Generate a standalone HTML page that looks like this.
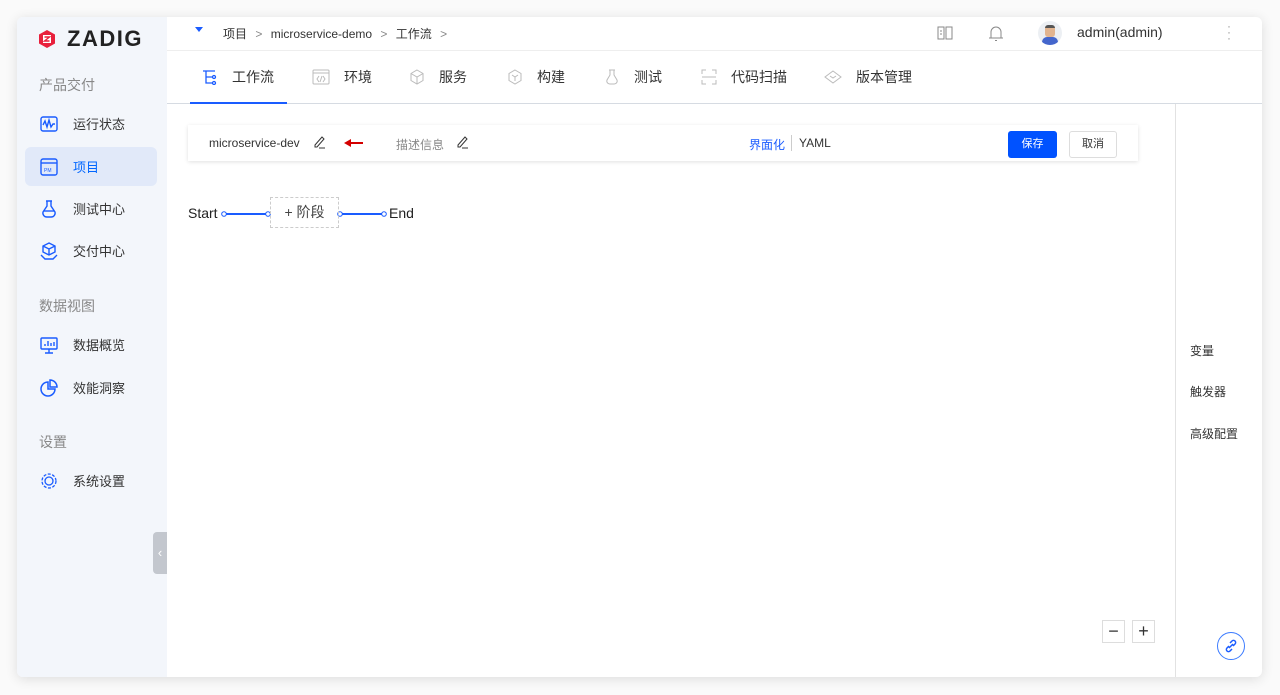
<!DOCTYPE html>
<html><head><meta charset="utf-8"><style>
*{box-sizing:border-box;margin:0;padding:0}
body{width:1280px;height:695px;background:#fafafa;font-family:"Liberation Sans","Noto Sans CJK SC",sans-serif;position:relative;overflow:hidden;color:#333}
.win{position:absolute;left:17px;top:17px;width:1245px;height:660px;background:#fff;border-radius:6px;box-shadow:0 2px 12px rgba(0,0,0,.12);overflow:hidden}
.side{position:absolute;left:0;top:0;width:150px;height:660px;background:#f3f6fb}
.logo{position:absolute;left:20px;top:9px;font-size:22px;font-weight:bold;color:#222;letter-spacing:1.5px}
.sec{position:absolute;left:22px;font-size:14px;color:#888}
.item{position:absolute;left:8px;width:132px;height:39px;font-size:13px;color:#333;display:flex;align-items:center;padding-left:15px}
.item svg{margin-right:15px}
.item.act{background:#e1e9f9;border-radius:6px;color:#0066ff}
.top{position:absolute;left:150px;top:0;right:0;height:34px;border-bottom:1px solid #eee;font-size:12px;color:#333}
.tabs{position:absolute;left:150px;top:34px;right:0;height:53px;border-bottom:1px solid #d6dbe2}
.tab{position:absolute;top:0;height:52px;display:flex;align-items:center;font-size:14px;color:#333}
.tab svg{margin-right:14px}
.rp{position:absolute;left:1158px;top:87px;width:1px;height:573px;background:#e2e2e2}
.rt{position:absolute;left:1173px;font-size:12px;color:#333}
.bar{position:absolute;left:171px;top:108px;width:950px;height:36px;background:#fff;box-shadow:0 1px 4px rgba(0,0,0,.12);font-size:12px}
</style></head><body>
<div class="win">
<div class="side">
 <div class="logo"><svg width="20" height="20" viewBox="0 0 20 20" style="vertical-align:-3px;margin-right:10px"><polygon points="10,1 18,5.5 18,14.5 10,19 2,14.5 2,5.5" fill="#e8203c"/><rect x="6" y="6" width="8" height="8" fill="#fff"/><path d="M7.5 8h5l-5 4h5" stroke="#e8203c" stroke-width="1.4" fill="none"/></svg>ZADIG</div>
 <div class="sec" style="top:58px">产品交付</div>
 <div class="item" style="top:87px"><svg width="18" height="18" viewBox="0 0 18 18" fill="none" stroke="#1a5cff" stroke-width="1.4"><rect x="1" y="2" width="16" height="14" rx="2"/><path d="M3 10l2-4 2 6 2-7 2 7 2-3h2"/></svg>运行状态</div>
 <div class="item act" style="top:130px"><svg width="18" height="18" viewBox="0 0 18 18" fill="none" stroke="#1a5cff" stroke-width="1.4"><rect x="1" y="1" width="16" height="16" rx="2"/><path d="M1 5h16"/><text x="4" y="14" font-size="5" fill="#1a5cff" stroke="none">PM</text></svg>项目</div>
 <div class="item" style="top:172px"><svg width="18" height="18" viewBox="0 0 18 18" fill="none" stroke="#1a5cff" stroke-width="1.4"><path d="M6 1h6M7 1v5l-4 6a4 4 0 0 0 4 5h4a4 4 0 0 0 4-5l-4-6V1"/><path d="M4 11h10"/></svg>测试中心</div>
 <div class="item" style="top:214px"><svg width="18" height="18" viewBox="0 0 18 18" fill="none" stroke="#1a5cff" stroke-width="1.4"><path d="M9 1l6 3v6l-6 3-6-3V4z M3 4l6 3 6-3 M9 7v6"/><path d="M1 13l4 4h8l4-4"/></svg>交付中心</div>
 <div class="sec" style="top:279px">数据视图</div>
 <div class="item" style="top:308px"><svg width="18" height="18" viewBox="0 0 18 18" fill="none" stroke="#1a5cff" stroke-width="1.4"><rect x="1" y="2" width="16" height="11" rx="1"/><path d="M9 13v4M5 17h8M5 10V8M8 10V5M11 10V7M14 10V6"/></svg>数据概览</div>
 <div class="item" style="top:351px"><svg width="18" height="18" viewBox="0 0 18 18" fill="none" stroke="#1a5cff" stroke-width="1.5"><path d="M8 3a7 7 0 1 0 7 7H8z"/><path d="M10 1a7 7 0 0 1 7 7h-7z"/></svg>效能洞察</div>
 <div class="sec" style="top:415px">设置</div>
 <div class="item" style="top:444px"><svg width="18" height="18" viewBox="0 0 18 18" fill="none" stroke="#1a5cff" stroke-width="1.3"><circle cx="9" cy="9" r="4"/><circle cx="9" cy="9" r="7" stroke-dasharray="3 1.5"/></svg>系统设置</div>
 <div style="position:absolute;left:136px;top:515px;width:14px;height:42px;background:#c3c7ce;border-radius:4px 0 0 4px;color:#fff;font-size:13px;text-align:center;line-height:42px">‹</div>
</div>
<div class="top">
 <span style="position:absolute;left:28px;top:10px;width:0;height:0;border-left:4px solid transparent;border-right:4px solid transparent;border-top:5px solid #1a5cff"></span>
 <span style="position:absolute;left:56px;top:8px">项目 <span style="color:#888;margin:0 5px">&gt;</span> microservice-demo <span style="color:#888;margin:0 5px">&gt;</span> 工作流 <span style="color:#888;margin:0 5px">&gt;</span></span>
 <svg style="position:absolute;left:770px;top:9px" width="16" height="14" viewBox="0 0 16 14" fill="none" stroke="#888"><path d="M1 1h6v12H1zM9 1h6v12H9z"/><path d="M3 5h2M3 8h2"/></svg>
 <svg style="position:absolute;left:821px;top:8px" width="16" height="17" viewBox="0 0 16 17" fill="none" stroke="#888"><path d="M3 13V7a5 5 0 0 1 10 0v6zM1 13h14M7 15.5h2"/></svg>
 <div style="position:absolute;left:871px;top:4px;width:24px;height:24px;border-radius:50%;background:#eceff3;overflow:hidden"><div style="position:absolute;left:7px;top:4px;width:10px;height:12px;background:#e2b48f;border-radius:3px;border-top:3px solid #555"></div><div style="position:absolute;left:4px;top:16px;width:16px;height:10px;background:#4466cc;border-radius:5px 5px 0 0"></div></div>
 <span style="position:absolute;left:910px;top:7px;font-size:14px;color:#333">admin(admin)</span>
 <span style="position:absolute;left:1060px;top:6px;color:#999;font-size:12px;line-height:6px">·<br>·<br>·</span>
</div>
<div class="tabs">
 <div class="tab" style="left:23px;width:97px;color:#333;padding-left:12px;border-bottom:2px solid #1a5cff;height:53px"><svg width="16" height="16" viewBox="0 0 16 16" fill="none" stroke="#1a5cff" stroke-width="1.3"><path d="M1 2h12M4 2v12h6M4 8h6"/><circle cx="12" cy="8" r="1.5"/><circle cx="12" cy="14" r="1.5"/></svg>工作流</div>
 <div class="tab" style="left:145px"><svg width="18" height="16" viewBox="0 0 18 16" fill="none" stroke="#bbb"><rect x="1" y="1" width="16" height="14" rx="1"/><path d="M1 4h16M7 7l-2 3 2 3M11 7l2 3-2 3M10 7l-2 6"/></svg>环境</div>
 <div class="tab" style="left:242px"><svg width="16" height="16" viewBox="0 0 16 16" fill="none" stroke="#bbb"><path d="M8 1l6 3.5v7L8 15l-6-3.5v-7zM8 8v7M2 4.5L8 8l6-3.5"/></svg>服务</div>
 <div class="tab" style="left:340px"><svg width="16" height="16" viewBox="0 0 16 16" fill="none" stroke="#bbb"><path d="M8 1l6 3.5v7L8 15l-6-3.5v-7z M5 6l3 2 3-2M8 8v4"/></svg>构建</div>
 <div class="tab" style="left:437px"><svg width="16" height="16" viewBox="0 0 16 16" fill="none" stroke="#bbb"><path d="M5 1h6M6 1v5l-3 5a3 3 0 0 0 3 4h4a3 3 0 0 0 3-4l-3-5V1"/></svg>测试</div>
 <div class="tab" style="left:534px"><svg width="16" height="16" viewBox="0 0 16 16" fill="none" stroke="#bbb"><path d="M1 5V1h4M11 1h4v4M15 11v4h-4M5 15H1v-4M1 8h14"/></svg>代码扫描</div>
 <div class="tab" style="left:657px"><svg width="18" height="14" viewBox="0 0 18 14" fill="none" stroke="#bbb"><path d="M9 1l8 6-8 6-8-6zM6 6l3 2 3-2"/></svg>版本管理</div>
</div>
<div class="bar">
 <span style="position:absolute;left:21px;top:11px;color:#333">microservice-dev</span>
 <svg style="position:absolute;left:124px;top:10px" width="14" height="14" viewBox="0 0 14 14" fill="none" stroke="#333"><path d="M3 10l7-8 2 2-7 8H3zM7 13h6"/></svg>
 <svg style="position:absolute;left:156px;top:14px" width="20" height="8"><path d="M0 4l7-4v3h12v2H7v3z" fill="#d40000"/></svg>
 <span style="position:absolute;left:208px;top:11px;color:#888">描述信息</span>
 <svg style="position:absolute;left:267px;top:10px" width="14" height="14" viewBox="0 0 14 14" fill="none" stroke="#333"><path d="M3 10l7-8 2 2-7 8H3zM7 13h6"/></svg>
 <span style="position:absolute;left:561px;top:11px;color:#1a5cff">界面化</span>
 <span style="position:absolute;left:603px;top:10px;width:1px;height:16px;background:#ccc"></span>
 <span style="position:absolute;left:611px;top:11px;color:#333">YAML</span>
 <div style="position:absolute;left:820px;top:6px;width:49px;height:27px;background:#0052ff;border-radius:3px;color:#fff;font-size:11px;text-align:center;line-height:27px">保存</div>
 <div style="position:absolute;left:881px;top:6px;width:48px;height:27px;border:1px solid #ddd;border-radius:3px;color:#333;font-size:11px;text-align:center;line-height:25px">取消</div>
</div>
<span style="position:absolute;left:171px;top:188px;font-size:14px;color:#222">Start</span>
<svg style="position:absolute;left:203px;top:192px" width="200" height="10"><g stroke="#1a5cff" fill="#fff"><line x1="6" y1="5" x2="47" y2="5" stroke-width="2"/><line x1="121" y1="5" x2="163" y2="5" stroke-width="2"/><circle cx="4" cy="5" r="2.3"/><circle cx="48" cy="5" r="2.3"/><circle cx="120" cy="5" r="2.3"/><circle cx="164" cy="5" r="2.3"/></g></svg>
<div style="position:absolute;left:253px;top:180px;width:69px;height:31px;border:1px dashed #ccc;font-size:14px;color:#444;text-align:center;line-height:29px">+ 阶段</div>
<span style="position:absolute;left:372px;top:188px;font-size:14px;color:#222">End</span>
<div class="rp"></div>
<div class="rt" style="top:325px">变量</div>
<div class="rt" style="top:366px">触发器</div>
<div class="rt" style="top:408px">高级配置</div>
<div style="position:absolute;left:1085px;top:603px;width:23px;height:23px;border:1px solid #ddd;text-align:center;line-height:20px;font-size:18px;color:#333">−</div>
<div style="position:absolute;left:1115px;top:603px;width:23px;height:23px;border:1px solid #ddd;text-align:center;line-height:21px;font-size:18px;color:#333">+</div>
<div style="position:absolute;left:1200px;top:615px;width:28px;height:28px;border:1.5px solid #3c7bff;border-radius:50%"><svg width="28" height="28" viewBox="0 0 28 28" style="position:absolute;left:-1.5px;top:-1.5px" fill="none" stroke="#1a5cff" stroke-width="1.5"><path d="M13 11l2-2a2 2 0 0 1 3 3l-2 2M15 17l-2 2a2 2 0 0 1-3-3l2-2M12 16l4-4"/></svg></div>
</div>
</body></html>
